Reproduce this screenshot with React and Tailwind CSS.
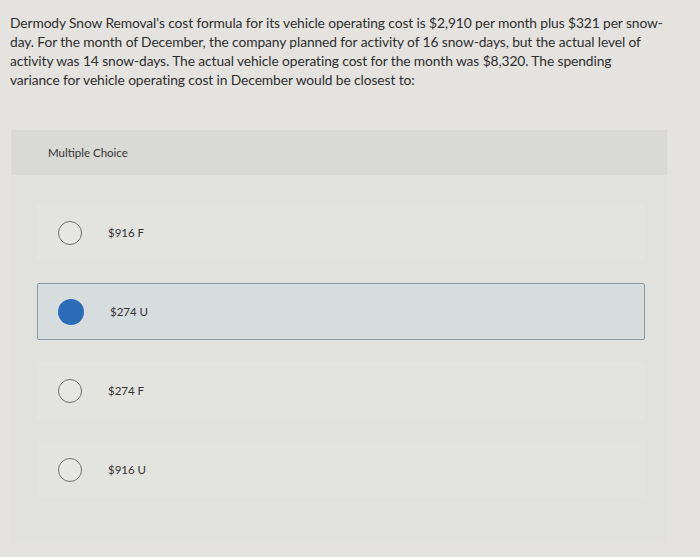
const OPTIONS = [
  { label: '$916 F', selected: false },
  { label: '$274 U', selected: true },
  { label: '$274 F', selected: false },
  { label: '$916 U', selected: false },
]

function Radio({ selected }) {
  if (selected) {
    return <div className="w-[26px] h-[26px] rounded-full bg-[#2b6cb8] shrink-0" />
  }
  return <div className="w-[24px] h-[24px] rounded-full border-[1.5px] border-[#6f6f6d] bg-[#e6e6e2] shrink-0" />
}

export default function App() {
  return (
    <div className="w-[700px] h-[557px] bg-[#e4e3df] text-[#2e2e2e] overflow-hidden" style={{ fontFamily: 'Lato, "Liberation Sans", sans-serif' }}>
      {/* Question */}
      <div className="pl-[10px] pt-[13px] text-[13.8px] leading-[19px] tracking-[-0.1px] whitespace-nowrap">
        <div>Dermody Snow Removal's cost formula for its vehicle operating cost is $2,910 per month plus $321 per snow-</div>
        <div>day. For the month of December, the company planned for activity of 16 snow-days, but the actual level of</div>
        <div>activity was 14 snow-days. The actual vehicle operating cost for the month was $8,320. The spending</div>
        <div>variance for vehicle operating cost in December would be closest to:</div>
      </div>

      {/* Multiple choice panel */}
      <div className="ml-[11px] mt-[41px] w-[656px] h-[413px] bg-[#e1e1dd]">
        <div className="h-[45px] bg-[#d9d9d5] pl-[37px] pt-[14px] text-[11.5px] text-[#333]">
          Multiple Choice
        </div>
        <div className="flex flex-col pt-[29px] pl-[26px] pr-[22px] gap-[22px]">
          {OPTIONS.map((o) => (
            <div
              key={o.label}
              className={
                o.selected
                  ? 'flex items-center h-[57px] bg-[#d7dcdd] border border-[#8d98a5] rounded-[2px] pl-[20px]'
                  : 'flex items-center h-[57px] bg-[#e3e3df] pl-[21px]'
              }
            >
              <Radio selected={o.selected} />
              <span className="ml-[26px] text-[11.5px] text-[#333]">{o.label}</span>
            </div>
          ))}
        </div>
      </div>
    </div>
  )
}
